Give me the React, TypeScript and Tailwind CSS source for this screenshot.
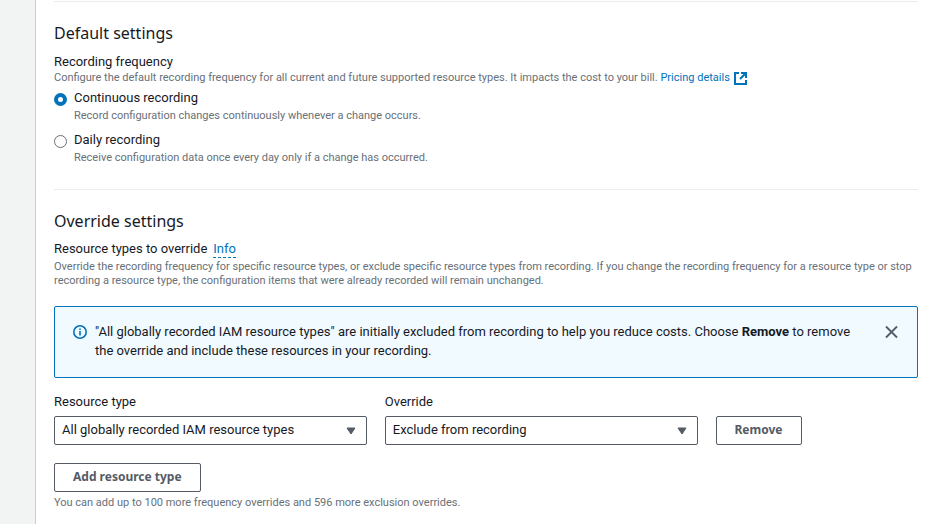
import { useState } from "react";
import type { ReactNode } from "react";

function Hint({ children, id }: { children: ReactNode; id?: string }) {
  return (
    <p id={id} className="text-[11px] leading-[14px] text-[#687078]">
      {children}
    </p>
  );
}

function SectionTitle({ children }: { children: ReactNode }) {
  return <h2 className="font-['Noto_Sans',sans-serif] text-base leading-5">{children}</h2>;
}

function ExternalIcon() {
  return (
    <svg viewBox="0 0 13 13" className="ml-1 inline-block size-[13px] align-middle" fill="none" stroke="currentColor" strokeWidth="2" role="img" aria-label="Opens in a new tab">
      <path d="M5 1H1v11h11V8" />
      <path d="M7 1h5v5M12 1 6 7" />
    </svg>
  );
}

function RadioOption({ id, label, hint, checked, onChange }: { id: string; label: string; hint: string; checked: boolean; onChange: () => void }) {
  return (
    <div className="flex gap-[7px]">
      <input
        type="radio"
        id={id}
        name="frequency"
        checked={checked}
        onChange={onChange}
        aria-describedby={`${id}-hint`}
        className="mt-1 size-[13px] shrink-0 appearance-none rounded-full border border-[#687078] bg-white checked:border-4 checked:border-[#0073bb]"
      />
      <div className="flex flex-col gap-0.5">
        <label htmlFor={id} className="leading-[18px]">
          {label}
        </label>
        <Hint id={`${id}-hint`}>{hint}</Hint>
      </div>
    </div>
  );
}

function SelectField({ id, label, options }: { id: string; label: string; options: string[] }) {
  return (
    <div className="col-span-3 flex flex-col gap-[5px]">
      <label htmlFor={id} className="leading-[18px]">
        {label}
      </label>
      <div className="grid items-center">
        <select id={id} className="col-start-1 row-start-1 h-[29px] w-full appearance-none rounded-xs border border-[#545b64] bg-white pr-8 pb-px pl-[7px]">
          {options.map((option) => (
            <option key={option}>{option}</option>
          ))}
        </select>
        <svg viewBox="0 0 10 8" className="pointer-events-none col-start-1 row-start-1 mr-[11px] h-2 w-[10px] justify-self-end" fill="#545b64" stroke="#545b64" strokeLinejoin="round" aria-hidden="true">
          <path d="M1 1h8L5 7z" />
        </svg>
      </div>
    </div>
  );
}

function Button({ children }: { children: ReactNode }) {
  return (
    <button type="button" className="h-[29px] rounded-xs border border-[#545b64] bg-white px-[18px] pb-px font-['Noto_Sans',sans-serif] text-xs font-bold whitespace-nowrap text-[#545b64]">
      {children}
    </button>
  );
}

export default function App() {
  const [frequency, setFrequency] = useState("continuous");
  const [showNotice, setShowNotice] = useState(true);

  return (
    <div className="flex min-h-screen bg-[#f2f3f3] font-[Roboto,'Noto_Sans',sans-serif] text-[13px] text-[#16191f]">
      <aside className="w-[35px] shrink-0" />
      <main className="min-w-0 grow border-l border-[#cccccc] bg-white pt-px pr-4 pl-[18px]">
        <section className="border-y border-[#eaeded] pt-[21px] pb-6">
          <SectionTitle>Default settings</SectionTitle>
          <fieldset className="mt-2">
            <legend className="pt-0.5 leading-[18px]">Recording frequency</legend>
            <Hint>
              Configure the default recording frequency for all current and future supported resource types. It impacts the cost to your bill.{" "}
              <a href="#pricing" className="text-[#0073bb]">
                Pricing details
                <ExternalIcon />
              </a>
            </Hint>
            <div className="mt-1 flex flex-col gap-2">
              <RadioOption id="continuous" label="Continuous recording" hint="Record configuration changes continuously whenever a change occurs." checked={frequency === "continuous"} onChange={() => setFrequency("continuous")} />
              <RadioOption id="daily" label="Daily recording" hint="Receive configuration data once every day only if a change has occurred." checked={frequency === "daily"} onChange={() => setFrequency("daily")} />
            </div>
          </fieldset>
        </section>

        <section className="pt-[21px] pb-4">
          <SectionTitle>Override settings</SectionTitle>
          <div className="mt-2 mb-px flex items-center gap-1.5 leading-5">
            <h3>Resource types to override</h3>
            <a href="#info" className="border-b border-dashed border-[#0073bb] leading-4 text-[#0073bb]">
              Info
            </a>
          </div>
          <Hint>
            Override the recording frequency for specific resource types, or exclude specific resource types from recording. If you change the recording frequency for a resource type or stop recording a resource type, the configuration items that were already recorded will remain unchanged.
          </Hint>

          {showNotice && (
            <div role="status" className="mt-[18px] flex items-start rounded-xs border border-[#0073bb] bg-[#f1faff] px-[18px] pt-[15px] pb-[17px]">
              <svg viewBox="0 0 14 14" className="mt-[3px] size-[14px] shrink-0" fill="none" stroke="#0073bb" strokeWidth="1.600" aria-hidden="true">
                <circle cx="7" cy="7" r="6.200" />
                <path d="M7 6v4.500M7 3.500V5" />
              </svg>
              <p className="mr-7 ml-2 grow leading-[19px]">
                "All globally recorded IAM resource types" are initially excluded from recording to help you reduce costs. Choose <b>Remove</b> to remove the override and include these resources in your recording.
              </p>
              <button type="button" aria-label="Dismiss" onClick={() => setShowNotice(false)} className="mt-[3px]">
                <svg viewBox="0 0 14 14" className="size-[14px]" fill="none" stroke="#545b64" strokeWidth="1.800" aria-hidden="true">
                  <path d="m1 1.500 11 11M12 1.500l-11 11" />
                </svg>
              </button>
            </div>
          )}

          <div className="mt-[15px] grid grid-cols-8 items-end gap-[18px]">
            <SelectField id="resource-type" label="Resource type" options={["All globally recorded IAM resource types"]} />
            <SelectField id="override" label="Override" options={["Exclude from recording"]} />
            <div className="col-span-2">
              <Button>Remove</Button>
            </div>
          </div>
          <div className="mt-[18px] flex flex-col items-start gap-1">
            <Button>Add resource type</Button>
            <Hint>You can add up to 100 more frequency overrides and 596 more exclusion overrides.</Hint>
          </div>
        </section>
      </main>
    </div>
  );
}
